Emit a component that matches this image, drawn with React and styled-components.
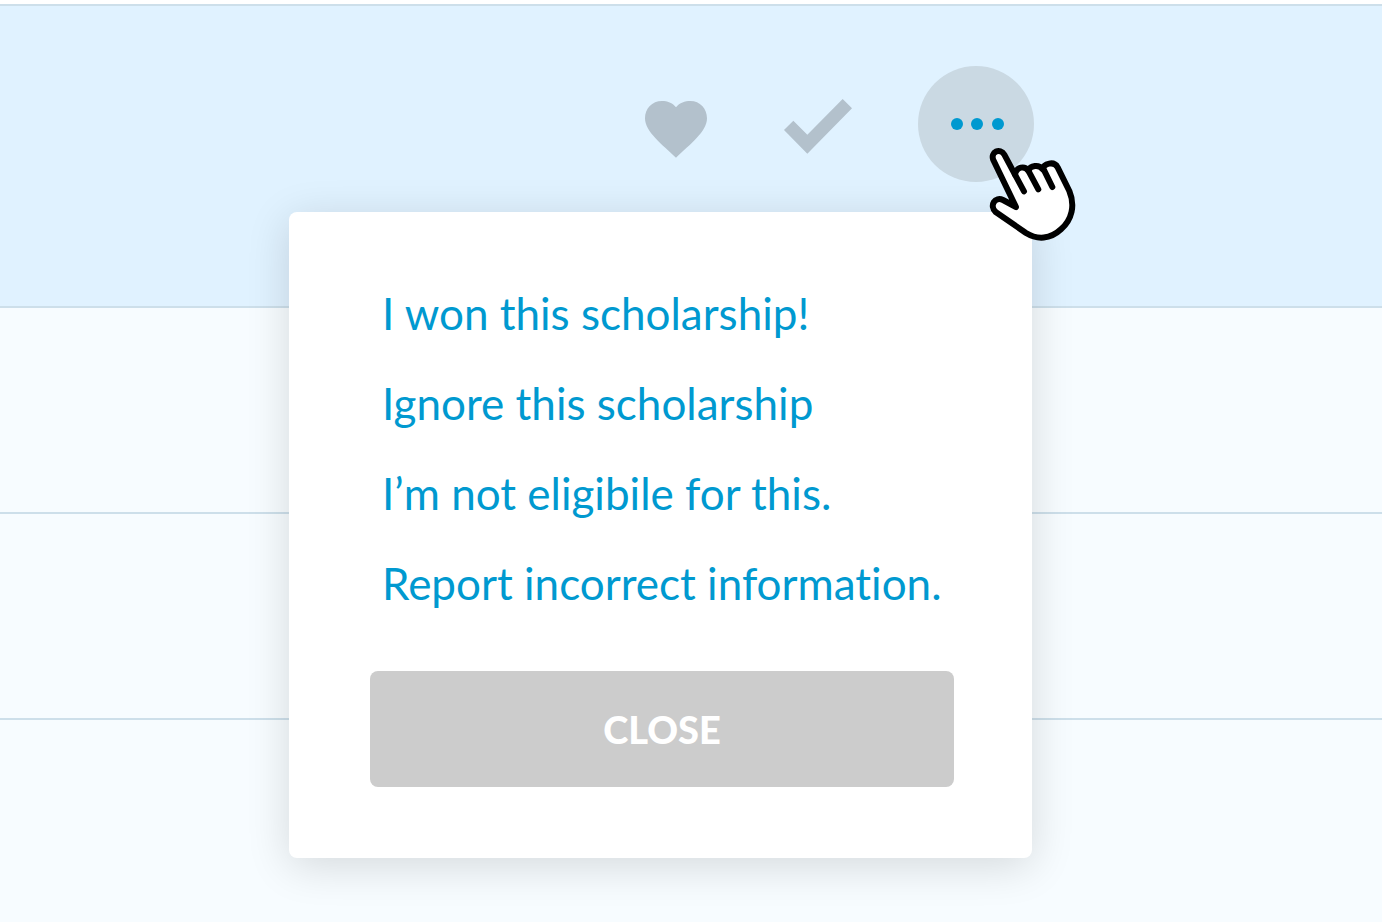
import styled, { createGlobalStyle } from 'styled-components';

// Styles Start
const GlobalStyle = createGlobalStyle`
	:root {
		--color-primary: #0099d0;
		--color-row: #f7fcff;
		--color-row-active: #e0f2ff;
		--color-line: #cddfea;
		--color-icon: #b3c1cc;
		--color-icon-active: #cad9e3;
		--color-disabled: #cccccc;
		--font-main: Lato, 'Liberation Sans', sans-serif;
	}
	* {
		box-sizing: border-box;
	}
	body {
		margin: 0;
		overflow: hidden;
		background-color: var(--color-row);
		font-family: var(--font-main);
	}
	button {
		font-family: inherit;
		border: 0;
		padding: 0;
		cursor: pointer;
	}
`;
const List = styled.main`
	border-top: 4px solid #fff;
`;
const Row = styled.section`
	min-height: 206px;
	border-bottom: ${({ $last }) => ($last ? '0' : '2px solid var(--color-line)')};
	background-color: var(--color-row);
`;
const ActiveRow = styled(Row)`
	display: flex;
	justify-content: flex-end;
	align-items: flex-start;
	gap: 58px;
	padding: 60px 348px 124px 0;
	border-top: 2px solid var(--color-line);
	background-color: var(--color-row-active);
`;
const IconButton = styled.button`
	width: 84px;
	height: 116px;
	display: flex;
	justify-content: center;
	align-items: center;
	background: none;

	svg {
		width: 84px;
		height: 84px;
		fill: var(--color-icon);
	}
`;
const MoreButton = styled(IconButton)`
	width: 116px;
	border-radius: 50%;
	background-color: var(--color-icon-active);

	svg {
		width: 116px;
		height: 116px;
		fill: var(--color-primary);
	}
`;
const MenuAnchor = styled.div`
	position: relative;
`;
const Menu = styled.div`
	position: absolute;
	top: calc(100% + 30px);
	right: 2px;
	width: 743px;
	padding: 56px 78px 71px 81px;
	border-radius: 8px;
	background-color: #fff;
	box-shadow: 0 8px 44px rgba(0, 0, 0, 0.14);
`;
const Options = styled.ul`
	list-style: none;
	margin: 0 0 43px;
	padding: 0 0 0 12px;
`;
const Option = styled.button`
	display: block;
	background: none;
	color: var(--color-primary);
	font-size: 44px;
	line-height: 90px;
	font-variant-ligatures: none;
	white-space: nowrap;
`;
const CloseButton = styled.button`
	width: 100%;
	height: 116px;
	border-radius: 8px;
	background-color: var(--color-disabled);
	color: #fff;
	font-size: 38px;
	font-weight: 900;
	line-height: 44px;
	text-transform: uppercase;
`;
const Pointer = styled.svg`
	position: absolute;
	top: 78px;
	left: 68px;
	width: 92px;
	height: 99px;
	fill: #fff;
	stroke: #000;
	stroke-width: 18;
	stroke-linecap: round;
	stroke-linejoin: round;
	pointer-events: none;
`;
// Styles End

const options = [
	'I won this scholarship!',
	'Ignore this scholarship',
	'I’m not eligibile for this.',
	'Report incorrect information.',
];

const Hand = () => (
	<Pointer viewBox='258 282 276 297' aria-hidden='true'>
		<path d='M348 471 L280 330 C270 306 301 292 313 314 L345 374 C350 349 374 347 385 362 C391 346 417 342 428 358 C431 340 462 332 473 352 L508 423 C526 466 516 508 483 538 C451 568 412 570 378 549 L287 486 C267 467 285 438 309 450 Z' />
		<path d='M345 374 L372 424 M385 362 L415 418 M428 352 L457 411' />
	</Pointer>
);

const App = () => {
	return (
		<>
			<GlobalStyle />
			<List>
				<ActiveRow>
					<IconButton aria-label='Favorite'>
						<svg viewBox='12 6 252 252'>
							<path d='M138 82 C149 68 165 63 181 63 C210 63 231 86 231 115 C231 155 179 194 138 233 C97 194 45 155 45 115 C45 86 66 63 96 63 C112 63 127 68 138 82 Z' />
						</svg>
					</IconButton>
					<IconButton aria-label='Applied'>
						<svg viewBox='438 6 252 252'>
							<path d='M462 150 L490 122 L532 164 L638 57 L666 85 L532 221 Z' />
						</svg>
					</IconButton>
					<MenuAnchor>
						<MoreButton aria-label='More options' aria-expanded='true'>
							<svg viewBox='54 48 348 348'>
								<circle cx='171' cy='222' r='18' />
								<circle cx='231' cy='222' r='18' />
								<circle cx='294' cy='222' r='18' />
							</svg>
						</MoreButton>
						<Menu>
							<Options>
								{options.map((option) => (
									<li key={option}>
										<Option>{option}</Option>
									</li>
								))}
							</Options>
							<CloseButton>Close</CloseButton>
						</Menu>
						<Hand />
					</MenuAnchor>
				</ActiveRow>
				<Row />
				<Row />
				<Row $last />
			</List>
		</>
	);
};

export default App;
